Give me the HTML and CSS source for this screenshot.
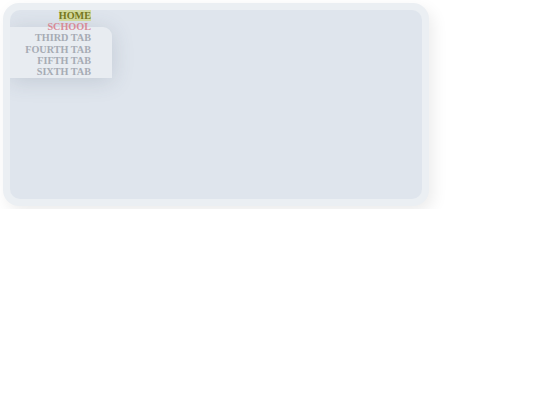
FILE: index.html
```html
<!DOCTYPE html>
<html>
<head>
<meta charset="utf-8">
<link rel="stylesheet" href="styles.css">
</head>
<body>
<div class="card">
  <div class="panel">
    <nav class="nav">
      <div class="menu-bg"></div>
      <ul class="tabs">
        <li class="tab tab-home"><span>HOME</span></li>
        <li class="tab tab-school">SCHOOL</li>
        <li class="tab">THIRD TAB</li>
        <li class="tab">FOURTH TAB</li>
        <li class="tab">FIFTH TAB</li>
        <li class="tab">SIXTH TAB</li>
      </ul>
    </nav>
  </div>
</div>
</body>
</html>
```

FILE: styles.css
```css
html, body {
  margin: 0;
  padding: 0;
  background: #ffffff;
}
body {
  padding: 3px;
  font-family: "Liberation Serif", "Times New Roman", serif;
}
.card {
  width: 412px;
  height: 189px;
  padding: 7px;
  background: #ebeff3;
  border-radius: 16px;
  box-shadow: 4px 6px 16px rgba(0, 0, 0, 0.08);
}
.panel {
  height: 189px;
  background: #dfe5ed;
  border-radius: 10px;
  overflow: hidden;
}
.nav {
  position: relative;
  width: 81px;
}
.menu-bg {
  position: absolute;
  left: 0;
  top: 17px;
  width: 102px;
  height: 51px;
  background: #e8ecf1;
  border-radius: 0 9px 0 0;
  box-shadow: 0 3px 22px rgba(60, 75, 100, 0.18);
}
.tabs {
  position: relative;
  list-style: none;
  margin: 0;
  padding: 0;
  text-align: right;
}
.tab {
  font-size: 10.2px;
  line-height: 11.2px;
  font-weight: bold;
  color: #a6abb4;
  white-space: nowrap;
}
.tab-home span {
  display: inline-block;
  color: #75761c;
  background: #d1d89c;
}
.tab-school {
  color: #d88a96;
}
```
